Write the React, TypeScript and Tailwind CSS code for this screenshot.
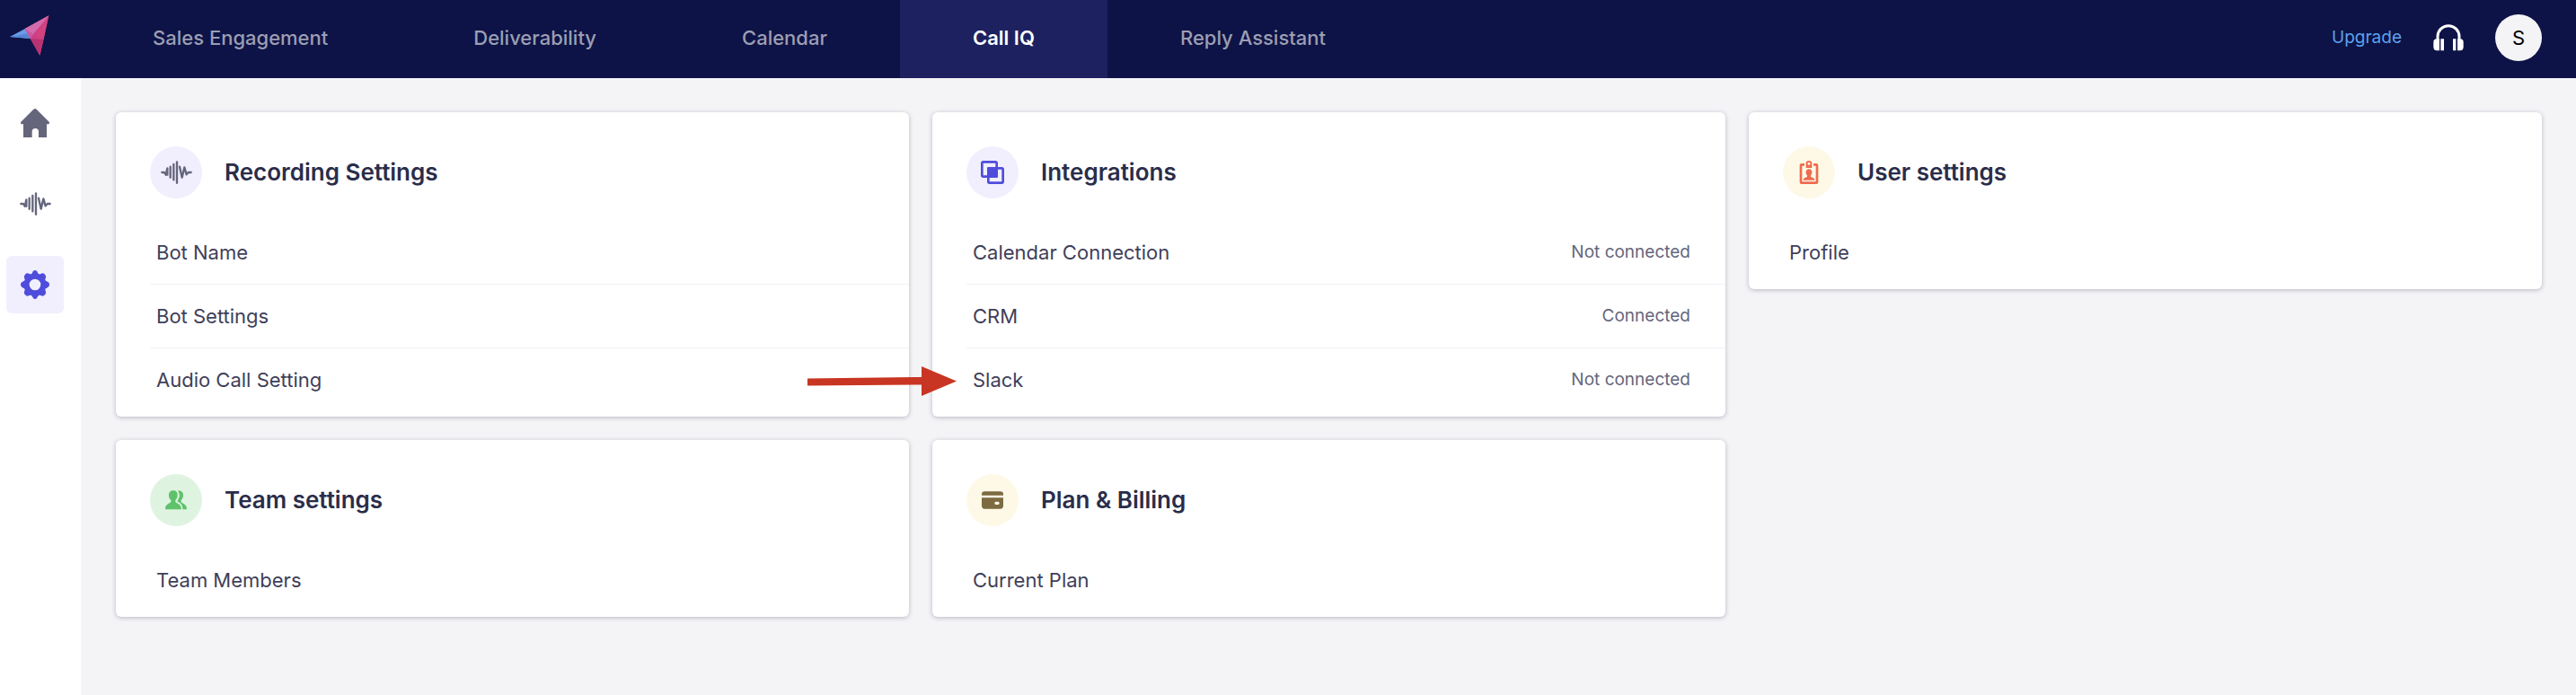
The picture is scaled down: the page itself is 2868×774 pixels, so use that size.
import React from "react";

interface SettingItem {
  label: string;
  status?: string;
  highlighted?: boolean;
}

interface SettingsCardProps {
  title: string;
  icon: React.ReactNode;
  iconClass: string;
  items: SettingItem[];
}

const tabs = ["Sales Engagement", "Deliverability", "Calendar", "Call IQ", "Reply Assistant"];

const LogoIcon = () => (
  <svg width="44" height="46" viewBox="0 0 132 138" aria-hidden="true">
    <path d="M0 72 52 44 72 78Z" fill="#6c9be8" />
    <path d="M0 72 62 60 72 79Z" fill="#5585d6" />
    <path d="M50 45 130 1 96 80 68 78Z" fill="#d063a6" />
    <path d="M50 45 100 40 90 80 68 78Z" fill="#c9589f" />
    <path d="M130 1 100 134 68 78Z" fill="#cf3d83" />
    <path d="M130 1 112 84 100 134 88 62Z" fill="#d2427f" />
    <path d="M68 78 112 80 100 134Z" fill="#b93372" />
    <path d="M50 45 130 1 78 62Z" fill="#d46bac" />
  </svg>
);

const WaveIcon = () => (
  <svg width="35" height="26" viewBox="0 0 105 78" fill="none" stroke="currentColor" strokeWidth="7" strokeLinecap="round" strokeLinejoin="round" aria-hidden="true">
    <path d="M4 39h8l5 8 5-22v22" />
    <path d="M32 20v36M43 12v52M54 4v70" />
    <path d="M63 20l8 36 8-34 7 24 6-7h9" />
  </svg>
);

const HomeIcon = () => (
  <svg width="32" height="32" viewBox="0 0 96 96" fill="currentColor" aria-hidden="true">
    <path d="M43 2q5-4 10 0l42 42q2 3 0 6-1 2-4 2h-4v44H60V77q0-11-11-11T38 77v19H9V52H5q-3 0-4-2-2-3 0-6Z" />
  </svg>
);

const GearIcon = () => (
  <svg width="32" height="32" viewBox="0 0 96 96" fill="currentColor" aria-hidden="true">
    <path
      fillRule="evenodd"
      d="M48 0c5 0 7 3 9 8 2 5 6 6 10 4 5-3 10-3 14 2 4 4 4 9 2 13-2 5-1 8 4 10 6 3 9 6 9 11s-3 8-9 11c-5 2-6 5-4 10 2 4 2 9-2 13-4 5-9 5-14 2-4-2-8-1-10 4-2 5-4 8-9 8s-7-3-9-8c-2-5-6-6-10-4-5 3-10 3-14-2-4-4-4-9-2-13 2-5 1-8-4-10-6-3-9-6-9-11s3-8 9-11c5-2 6-5 4-10-2-4-2-9 2-13 4-5 9-5 14-2 4 2 8 1 10-4 2-5 4-8 9-8Zm0 29a19 19 0 1 0 0 38 19 19 0 0 0 0-38Z"
    />
  </svg>
);

const HeadphonesIcon = () => (
  <svg width="34" height="30" viewBox="0 0 102 90" aria-hidden="true">
    <path d="M15 50V41a36 36 0 0 1 72 0v9" fill="none" stroke="currentColor" strokeWidth="9" />
    <path d="M21 49v39H12Q1 88 1 76V60Q1 49 12 49ZM81 49v39h9q11 0 11-12V60q0-11-11-11Z" fill="currentColor" />
    <path d="M25 49h11v39H25ZM66 49h10v39H66Z" fill="currentColor" />
  </svg>
);

const IntegrationIcon = () => (
  <svg width="26" height="26" viewBox="0 0 78 78" fill="none" stroke="currentColor" strokeWidth="8" strokeLinejoin="round" aria-hidden="true">
    <rect x="4" y="4" width="49" height="49" rx="4" />
    <rect x="25" y="25" width="49" height="49" rx="4" />
    <rect x="25" y="25" width="28" height="28" fill="currentColor" />
  </svg>
);

const BadgeIcon = () => (
  <svg width="22" height="26" viewBox="0 0 66 78" aria-hidden="true">
    <path d="M18 13H8q-2 0-2 2v57q0 2 2 2h50q2 0 2-2V15q0-2-2-2H48" fill="none" stroke="currentColor" strokeWidth="8" />
    <path fillRule="evenodd" d="M23 24V8q0-8 10-8t10 8v16Zm10-19a4 4 0 0 0 0 9 4 4 0 0 0 0-9Z" fill="currentColor" />
    <path d="M33 28c7 0 11 5 10 12 0 4-2 7-4 9v4c5 4 13 3 13 12H14c0-9 8-8 13-12v-4c-2-2-4-5-4-9-1-7 3-12 10-12Z" fill="currentColor" />
  </svg>
);

const TeamIcon = () => (
  <svg width="24" height="22" viewBox="0 0 72 66" fill="currentColor" aria-hidden="true">
    <path d="M27 1c9 0 15 6 14 16 0 7-3 12-7 16v7c7 5 20 6 20 24H0c0-18 13-19 19-24v-7c-5-4-7-9-7-16C11 7 18 1 27 1Z" />
    <path d="M40 2c11-3 21 3 20 15 0 7-3 12-7 16v7c6 5 19 7 19 24H58c0-15-6-20-18-25v-4c8-9 10-24 0-33Z" />
    <path d="M39 1c9 9 7 24-1 34v4c11 4 18 9 18 26" fill="none" stroke="#dff3e1" strokeWidth="4" />
  </svg>
);

const CardIcon = () => (
  <svg width="24" height="20" viewBox="0 0 72 60" fill="currentColor" aria-hidden="true">
    <path d="M0 14V11Q0 1 10 1H62q10 0 10 10v3Z" />
    <path fillRule="evenodd" d="M0 22H72V48q0 11-10 11H10Q0 59 0 48Zm47 13q-4 0-4 5t4 5h8q4 0 4-5t-4-5Z" />
  </svg>
);

const PointerArrow = () => (
  <svg className="absolute right-full z-10 mr-[11px] h-[38px] w-[166px]" viewBox="0 -4 166 38" fill="#c93523" aria-hidden="true">
    <path d="M0 13.5 127 12V0l39 16.5L127 33V20.5L0 21.5Z" />
  </svg>
);

const SettingsCard: React.FC<SettingsCardProps> = ({ title, icon, iconClass, items }) => {
  return (
    <section className="rounded-md bg-white pb-[6px] pl-[38px] pt-[38px] shadow-[0_1px_5px_rgba(40,40,70,0.3)]">
      <div className="mb-[25px] flex items-center gap-[25px]">
        <span className={`flex size-[58px] shrink-0 items-center justify-center rounded-full ${iconClass}`}>{icon}</span>
        <h2 className="text-[26px] font-semibold leading-8 text-[#2a2d4a]">{title}</h2>
      </div>
      <ul className="divide-y divide-[#f3f3f6]">
        {items.map((item) => (
          <li key={item.label} className="relative flex items-center">
            {item.highlighted && <PointerArrow />}
            <a href="#" className="flex h-[70px] flex-1 items-center justify-between pl-[7px] pr-[39px] text-[22px] text-[#3f4059]">
              {item.label}
              {item.status && <span className="text-[19px] text-[#65667c]">{item.status}</span>}
            </a>
          </li>
        ))}
      </ul>
    </section>
  );
};

const App: React.FC = () => {
  return (
    <div className="flex min-h-screen flex-col bg-[#f4f4f7] font-['Inter',sans-serif]">
      {/* Top bar */}
      <header className="flex h-[87px] items-stretch bg-[#0d1346]">
        <a href="#" aria-label="Home" className="w-[89px] shrink-0 pl-[11px] pt-[17px]">
          <LogoIcon />
        </a>
        <nav className="flex flex-1">
          {tabs.map((tab) => (
            <a
              key={tab}
              href="#"
              className={`flex items-center px-[81px] pb-[3px] text-[22px] ${tab === "Call IQ" ? "bg-[#1d2160] font-semibold text-white" : "font-medium text-[#9c9eb3]"}`}
            >
              {tab}
            </a>
          ))}
        </nav>
        <div className="flex items-center gap-[35px] pb-[3px] pr-[38px]">
          <a href="#" className="text-[19px] text-[#5da2ee]">Upgrade</a>
          <button type="button" aria-label="Support" className="text-white">
            <HeadphonesIcon />
          </button>
          <button type="button" className="size-[52px] rounded-full bg-[#f4f4f7] text-[22px] text-black">S</button>
        </div>
      </header>

      <div className="flex flex-1">
        {/* Sidebar */}
        <aside className="flex w-[90px] shrink-0 flex-col gap-[26px] bg-white pl-[7px] pt-[18px] text-[#65667c]">
          <button type="button" aria-label="Home" className="flex size-16 items-center justify-center rounded-md">
            <HomeIcon />
          </button>
          <button type="button" aria-label="Recordings" className="flex size-16 items-center justify-center rounded-md">
            <WaveIcon />
          </button>
          <button type="button" aria-label="Settings" className="flex size-16 items-center justify-center rounded-md bg-[#f1effe] text-[#4f4ddc]">
            <GearIcon />
          </button>
        </aside>

        <main className="grid flex-1 grid-cols-3 content-start items-start gap-[26px] pb-[38px] pl-[39px] pr-[38px] pt-[38px]">
          <SettingsCard
            title="Recording Settings"
            icon={<WaveIcon />}
            iconClass="bg-[#f1effe] text-[#65667c]"
            items={[{ label: "Bot Name" }, { label: "Bot Settings" }, { label: "Audio Call Setting" }]}
          />
          <SettingsCard
            title="Integrations"
            icon={<IntegrationIcon />}
            iconClass="bg-[#f1effe] text-[#4f4ddc]"
            items={[
              { label: "Calendar Connection", status: "Not connected" },
              { label: "CRM", status: "Connected" },
              { label: "Slack", status: "Not connected", highlighted: true },
            ]}
          />
          <SettingsCard title="User settings" icon={<BadgeIcon />} iconClass="bg-[#fef9e7] text-[#ee6c50]" items={[{ label: "Profile" }]} />
          <SettingsCard title="Team settings" icon={<TeamIcon />} iconClass="bg-[#dff3e1] text-[#5fc26b]" items={[{ label: "Team Members" }]} />
          <SettingsCard title="Plan & Billing" icon={<CardIcon />} iconClass="bg-[#fef9e7] text-[#7d6b42]" items={[{ label: "Current Plan" }]} />
        </main>
      </div>
    </div>
  );
};

export default App;
